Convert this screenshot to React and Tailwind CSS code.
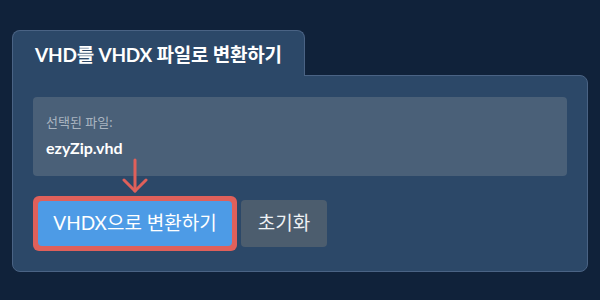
export default function App() {
  return (
    <div
      className="w-[600px] h-[300px] bg-[#10223a] pt-[30px] px-3"
      style={{ fontFamily: '"Lato", "Noto Sans CJK KR", sans-serif' }}
    >
      <div className="relative z-10 w-[293px] h-[46px] -mb-px bg-[#2c4868] border border-b-0 border-[#4a6384] rounded-t-lg pl-[22px] pt-[3px] flex items-center">
        <span className="text-[19px] font-bold text-white tracking-[-0.2px]">VHD를 VHDX 파일로 변환하기</span>
      </div>
      <div className="bg-[#2c4868] border border-[#4a6384] rounded-b-lg rounded-tr-lg px-5 pt-[21px] pb-5">
        <div className="bg-[#4a6078] rounded h-[79px] px-[13px] pt-[15px]">
          <div className="text-[13px] leading-[20px] text-[#a9b4c0]">선택된 파일:</div>
          <div className="mt-[5px] text-[16px] leading-[22px] font-bold text-white">ezyZip.vhd</div>
        </div>
        <div className="mt-5 flex items-center gap-1">
          <div className="relative bg-[#e0605a] rounded-md p-[5px]">
            <svg
              className="absolute left-[89px] top-[-38px]"
              width="26"
              height="36"
              viewBox="0 0 26 36"
              fill="none"
              stroke="#e0605a"
              strokeWidth="3"
              strokeLinecap="round"
              strokeLinejoin="round"
            >
              <path d="M13 2 V33" />
              <path d="M2 22 L13 33 L24 22" />
            </svg>
            <button className="w-[194px] h-[45px] bg-[#4d9be6] rounded-sm text-white text-[19px]">
              VHDX으로 변환하기
            </button>
          </div>
          <button className="w-[86px] h-[47px] bg-[#4c5d6e] rounded text-[#eef1f4] text-[19px]">
            초기화
          </button>
        </div>
      </div>
    </div>
  );
}
